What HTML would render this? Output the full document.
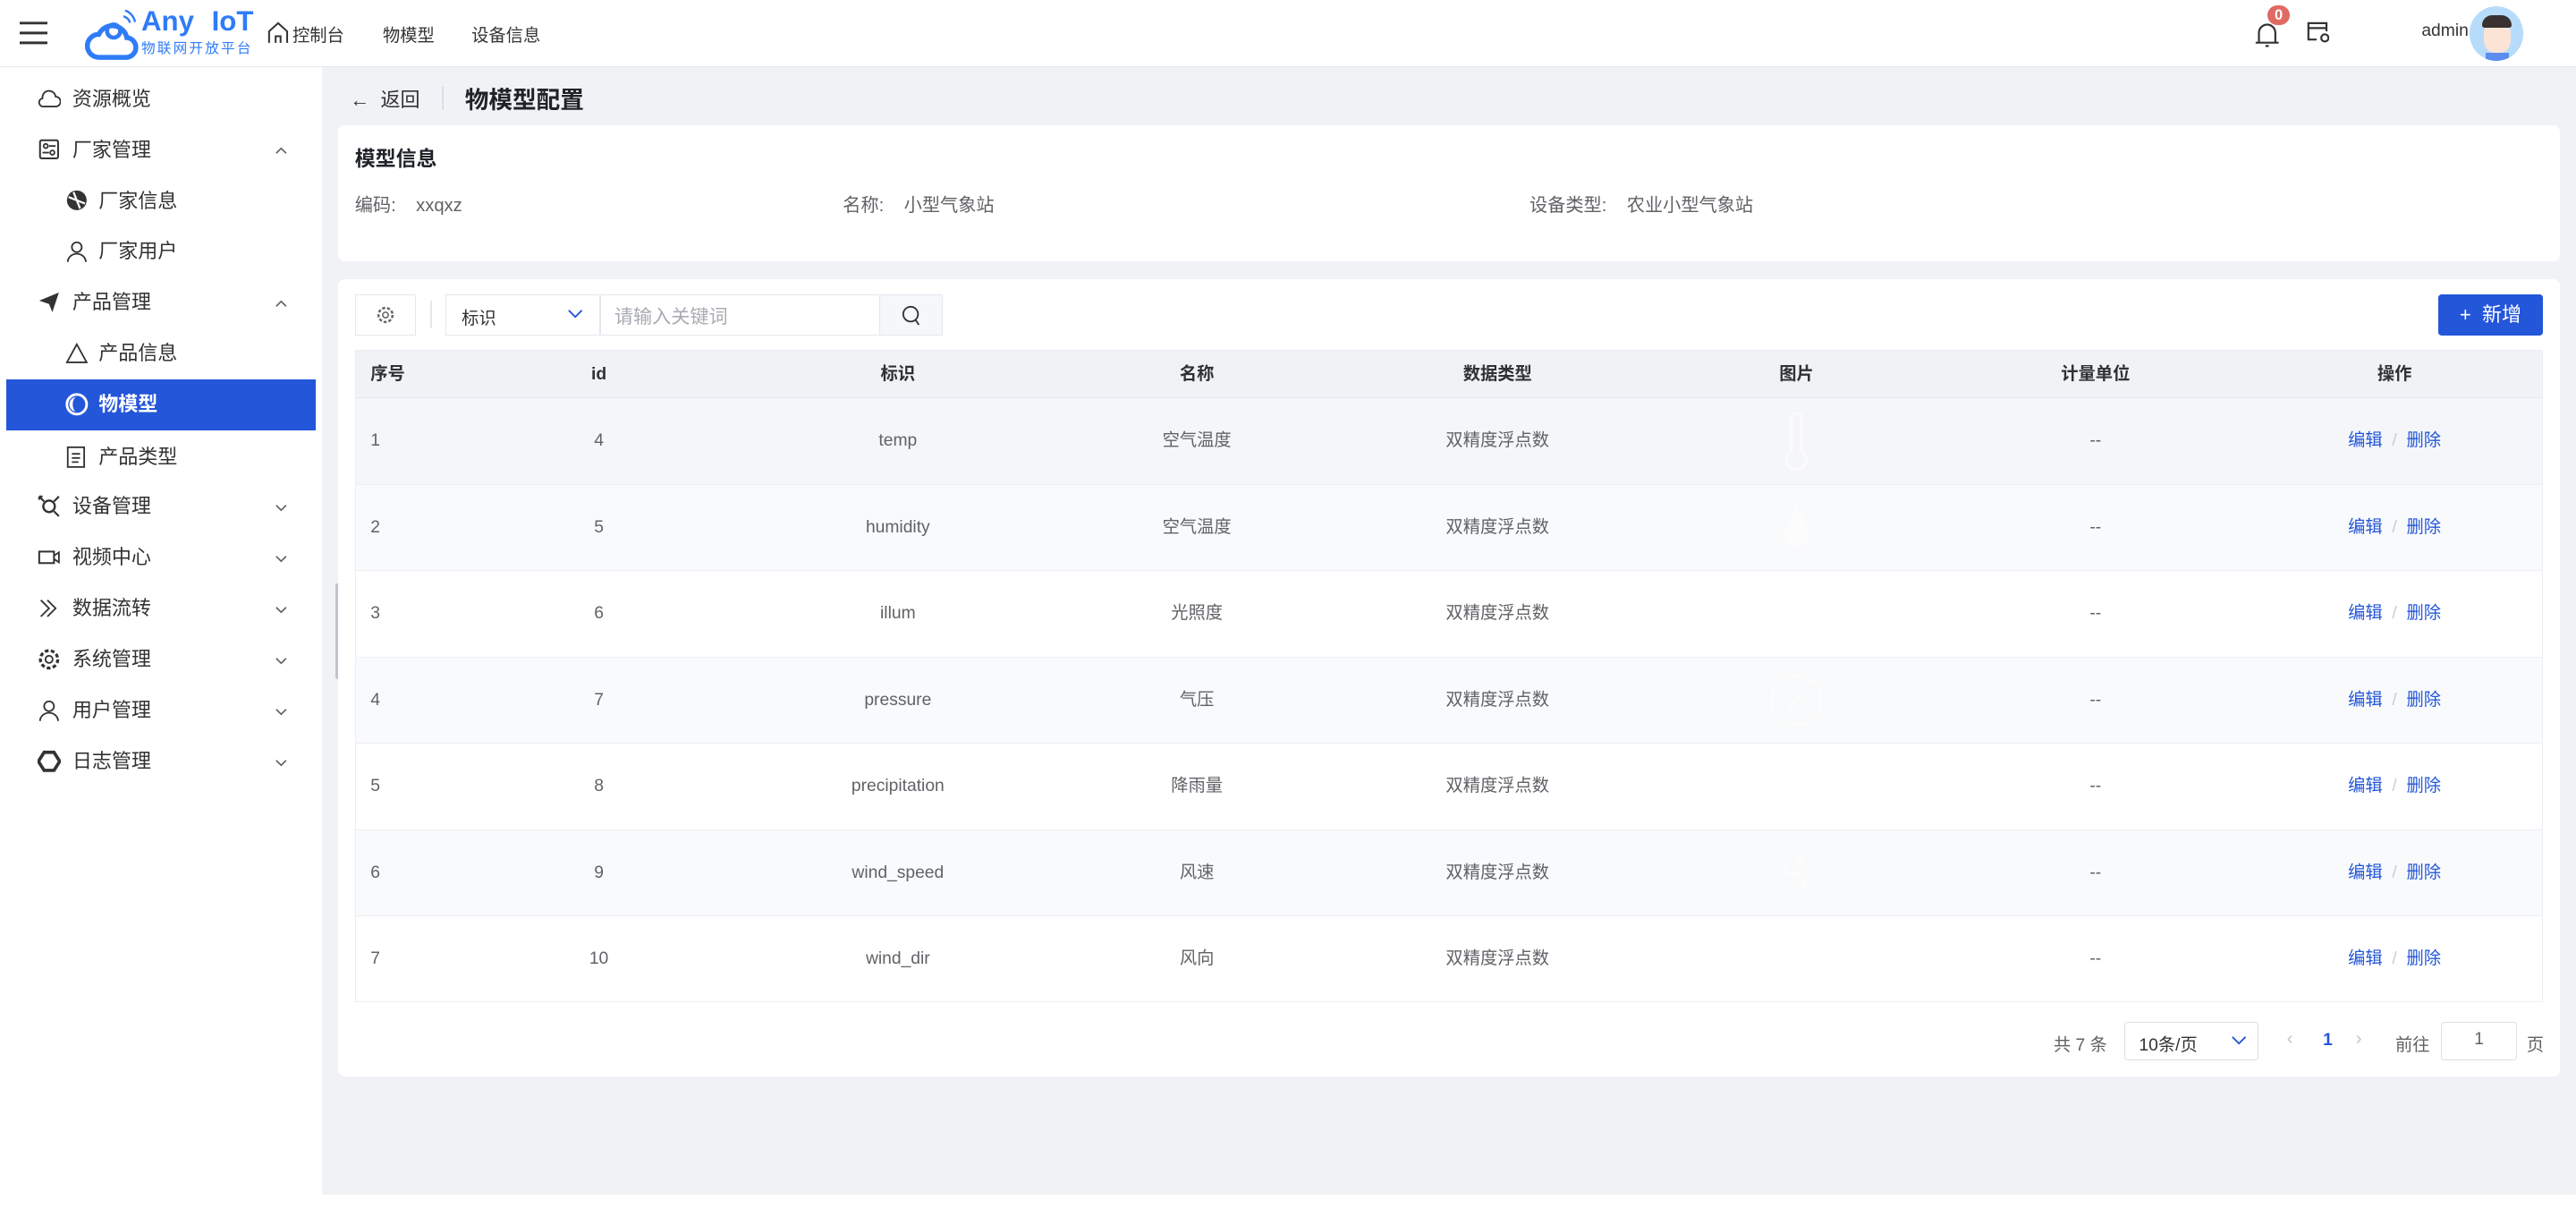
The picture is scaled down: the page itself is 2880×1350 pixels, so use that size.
<!DOCTYPE html>
<html><head><meta charset="utf-8">
<style>
*{box-sizing:border-box;margin:0;padding:0}
html{zoom:1.836735}
body{width:1568px;height:735px;overflow:hidden;background:#fff;font-family:"Liberation Sans","Noto Sans CJK SC",sans-serif;color:#303133;position:relative}
.abs{position:absolute}
.hdr{left:0;top:0;width:1568px;height:41px;background:#fff;border-bottom:1px solid #e6e8eb}
.side{left:0;top:41px;width:196px;height:694px;background:#fff}
.main{left:196px;top:41px;width:1372px;height:686px;background:#f0f2f5}
.mi{position:absolute;left:0;width:192px;height:31px;font-size:12px;color:#303133;line-height:31px}
.mi svg{position:absolute;top:8px;width:14px;height:14px}
.mi svg.chev{position:absolute;left:167px;top:13px;width:8px;height:6px}
.mi .t{position:absolute}
.card{background:#fff;border-radius:4px;position:absolute}
.th{position:absolute;top:0;height:29px;line-height:29px;font-size:10.5px;font-weight:bold;color:#303133;text-align:center}
.row{position:absolute;left:0;width:1332px;height:52.5px;border-bottom:1px solid #ebeef5}
.c{position:absolute;top:0;line-height:52px;font-size:10.5px;color:#606266;text-align:center;width:182px}
.op{color:#2356d9}
.pic{opacity:.55}
</style></head><body>
<!-- header -->
<div class="abs hdr">
  <svg class="abs" style="left:12px;top:13px" width="17" height="14" viewBox="0 0 17 14"><path d="M0 1h17M0 7h17M0 13h17" stroke="#333" stroke-width="1.6"/></svg>
  <svg class="abs" style="left:51px;top:5px" width="36" height="32" viewBox="0 0 36 32"><path d="M9 30h16a6 6 0 0 0 1-12 9 9 0 0 0-17-2 7 7 0 0 0 0 14z" fill="none" stroke="#2f7cf6" stroke-width="3"/><circle cx="18" cy="14" r="4" fill="none" stroke="#2f7cf6" stroke-width="2.5"/><path d="M24 5a6 6 0 0 1 4 4M25 1.5a9 9 0 0 1 6 7" fill="none" stroke="#2f7cf6" stroke-width="1.3"/></svg>
  <div class="abs" style="left:86px;top:3px;font-size:17px;font-weight:bold;color:#2f7cf6;word-spacing:6px">Any IoT</div>
  <div class="abs" style="left:86px;top:23px;font-size:8.5px;color:#2f7cf6;letter-spacing:1.2px">物联网开放平台</div>
  <svg class="abs" style="left:163px;top:13px" width="13" height="13" viewBox="0 0 13 13"><path d="M1 13V6L6.5 1 12 6v7M5 13V9h3v4" fill="none" stroke="#333" stroke-width="1.1"/></svg>
  <div class="abs" style="left:178px;top:13px;font-size:10.5px;color:#333">控制台</div>
  <div class="abs" style="left:233px;top:13px;font-size:10.5px;color:#333">物模型</div>
  <div class="abs" style="left:287px;top:13px;font-size:10.5px;color:#333">设备信息</div>
  <svg class="abs" style="left:1372px;top:12px" width="16" height="17" viewBox="0 0 16 17"><path d="M3 14V8a5 5 0 0 1 10 0v6M1 14h14M7 16h2" fill="none" stroke="#333" stroke-width="1.2"/></svg>
  <div class="abs" style="left:1380px;top:3px;width:14px;height:12px;border-radius:6px;background:#e06a62;color:#fff;font-size:9px;font-weight:bold;text-align:center;line-height:12px">0</div>
  <svg class="abs" style="left:1404px;top:13px" width="14" height="13" viewBox="0 0 14 13"><path d="M6 11H1V1h11v5M1 4h11" fill="none" stroke="#333" stroke-width="1.2"/><circle cx="11" cy="10" r="2.2" fill="none" stroke="#333" stroke-width="1.2"/></svg>
  <div class="abs" style="left:1474px;top:13px;font-size:10.5px;color:#333">admin</div>
  <div class="abs" style="left:1503px;top:4px;width:33px;height:33px;border-radius:50%;background:#b7dcfb;overflow:hidden">
    <div class="abs" style="left:9px;top:9px;width:16px;height:19px;border-radius:7px;background:#fbe3d6"></div>
    <div class="abs" style="left:8px;top:5px;width:18px;height:8px;border-radius:8px 8px 2px 2px;background:#3a3030"></div>
    <div class="abs" style="left:10px;top:28px;width:14px;height:6px;background:#5b8def"></div>
  </div>
</div>
<!-- sidebar -->
<div class="abs side">
  <div class="mi" style="top:4px"><svg style="left:23px" viewBox="0 0 14 14"><path d="M4 12h7a3 3 0 0 0 0-6 4 4 0 0 0-8 1 2.5 2.5 0 0 0 1 5z" fill="none" stroke="#333"/></svg><span class="t" style="left:44px">资源概览</span></div>
  <div class="mi" style="top:35px"><svg style="left:23px" viewBox="0 0 14 14"><rect x="1.5" y="1.5" width="11" height="11" rx="1" fill="none" stroke="#333" stroke-width="1.1"/><circle cx="5" cy="5" r="1.3" fill="none" stroke="#333"/><circle cx="9" cy="9" r="1.3" fill="none" stroke="#333"/><path d="M7 5h4M3 9h4" stroke="#333"/></svg><span class="t" style="left:44px">厂家管理</span><svg class="chev" viewBox="0 0 8 6"><path d="M1 4.5l3-3 3 3" fill="none" stroke="#606266" stroke-width=".9"/></svg></div>
  <div class="mi" style="top:66px"><svg style="left:40px" viewBox="0 0 14 14"><circle cx="7" cy="7" r="6" fill="#333"/><path d="M2 5l10 4M5 2l4 10" stroke="#fff" stroke-width="1.2"/></svg><span class="t" style="left:60px">厂家信息</span></div>
  <div class="mi" style="top:97px"><svg style="left:40px" viewBox="0 0 14 14"><circle cx="7" cy="4.5" r="3" fill="none" stroke="#333"/><path d="M1.5 13.5a5.5 5 0 0 1 11 0" fill="none" stroke="#333"/></svg><span class="t" style="left:60px">厂家用户</span></div>
  <div class="mi" style="top:128px"><svg style="left:23px" viewBox="0 0 14 14"><path d="M1 6l12-5-4 12-2-5z" fill="#333"/></svg><span class="t" style="left:44px">产品管理</span><svg class="chev" viewBox="0 0 8 6"><path d="M1 4.5l3-3 3 3" fill="none" stroke="#606266" stroke-width=".9"/></svg></div>
  <div class="mi" style="top:159px"><svg style="left:40px" viewBox="0 0 14 14"><path d="M7 1.5L13 12.5H1z" fill="none" stroke="#333"/></svg><span class="t" style="left:60px">产品信息</span></div>
  <div class="mi" style="top:190px;left:4px;width:188px;background:#2356d9;color:#fff;font-weight:bold"><svg style="left:36px" viewBox="0 0 14 14"><circle cx="7" cy="7" r="6" fill="none" stroke="#fff" stroke-width="1.6"/><path d="M7 2.5A4.5 4.5 0 0 0 7 11.5A2.5 4.5 0 0 1 7 2.5z" fill="#fff"/></svg><span class="t" style="left:56px">物模型</span></div>
  <div class="mi" style="top:222px"><svg style="left:40px" viewBox="0 0 14 14"><rect x="1.5" y="1" width="10" height="12" fill="none" stroke="#333"/><path d="M4 5h5M4 7.5h5M4 10h4" stroke="#333"/></svg><span class="t" style="left:60px">产品类型</span></div>
  <div class="mi" style="top:252px"><svg style="left:23px" viewBox="0 0 14 14"><circle cx="7" cy="7" r="3.5" fill="none" stroke="#333" stroke-width="1.3"/><path d="M1 1l3 3M13 1l-3 3M10 10l3 3M1 1h2M1 1v2" stroke="#333" stroke-width="1.2"/></svg><span class="t" style="left:44px">设备管理</span><svg class="chev" viewBox="0 0 8 6"><path d="M1 1.5l3 3 3-3" fill="none" stroke="#606266" stroke-width=".9"/></svg></div>
  <div class="mi" style="top:283px"><svg style="left:23px" viewBox="0 0 14 14"><rect x="1" y="3.5" width="9" height="7" fill="none" stroke="#333" stroke-width="1.1"/><path d="M10 6l3-2v6l-3-2" fill="none" stroke="#333"/></svg><span class="t" style="left:44px">视频中心</span><svg class="chev" viewBox="0 0 8 6"><path d="M1 1.5l3 3 3-3" fill="none" stroke="#606266" stroke-width=".9"/></svg></div>
  <div class="mi" style="top:314px"><svg style="left:23px" viewBox="0 0 14 14"><path d="M2 2l5 5-5 5M6 2l5 5-5 5" fill="none" stroke="#333"/></svg><span class="t" style="left:44px">数据流转</span><svg class="chev" viewBox="0 0 8 6"><path d="M1 1.5l3 3 3-3" fill="none" stroke="#606266" stroke-width=".9"/></svg></div>
  <div class="mi" style="top:345px"><svg style="left:23px" viewBox="0 0 14 14"><circle cx="7" cy="7" r="2.2" fill="none" stroke="#333"/><circle cx="7" cy="7" r="5.3" fill="none" stroke="#333" stroke-width="1.8" stroke-dasharray="2.3 1.4"/></svg><span class="t" style="left:44px">系统管理</span><svg class="chev" viewBox="0 0 8 6"><path d="M1 1.5l3 3 3-3" fill="none" stroke="#606266" stroke-width=".9"/></svg></div>
  <div class="mi" style="top:376px"><svg style="left:23px" viewBox="0 0 14 14"><circle cx="7" cy="4.5" r="3" fill="none" stroke="#333"/><path d="M1.5 13.5a5.5 5 0 0 1 11 0" fill="none" stroke="#333"/></svg><span class="t" style="left:44px">用户管理</span><svg class="chev" viewBox="0 0 8 6"><path d="M1 1.5l3 3 3-3" fill="none" stroke="#606266" stroke-width=".9"/></svg></div>
  <div class="mi" style="top:407px"><svg style="left:23px" viewBox="0 0 14 14"><path d="M4 1.5h6l3.5 5.5-3.5 5.5H4L.5 7z" fill="none" stroke="#333" stroke-width="2"/></svg><span class="t" style="left:44px">日志管理</span><svg class="chev" viewBox="0 0 8 6"><path d="M1 1.5l3 3 3-3" fill="none" stroke="#606266" stroke-width=".9"/></svg></div>
</div>
<!-- main -->
<div class="abs main">
  <div class="abs" style="left:8px;top:314px;width:3px;height:58px;border-radius:2px;background:#c0c4cc"></div>
  <div class="abs" style="left:17px;top:10px;font-size:12px;color:#333">←&nbsp; 返回</div>
  <div class="abs" style="left:73px;top:12px;width:1px;height:14px;background:#dcdfe6"></div>
  <div class="abs" style="left:87px;top:8px;font-size:14.5px;font-weight:bold;color:#1f2329">物模型配置</div>
  <div class="card" style="left:10px;top:35px;width:1352px;height:83px">
    <div class="abs" style="left:10px;top:10px;font-size:12.5px;font-weight:bold;color:#1f2329">模型信息</div>
    <div class="abs" style="left:10px;top:40px;font-size:11px;color:#606266">编码:&nbsp;&nbsp;&nbsp; xxqxz</div>
    <div class="abs" style="left:307px;top:40px;font-size:11px;color:#606266">名称:&nbsp;&nbsp;&nbsp; 小型气象站</div>
    <div class="abs" style="left:725px;top:40px;font-size:11px;color:#606266">设备类型:&nbsp;&nbsp;&nbsp; 农业小型气象站</div>
  </div>
  <div class="card" style="left:10px;top:129px;width:1352px;height:485px">
    <div class="abs" style="left:10px;top:9px;width:37px;height:25px;border:1px solid #e4e7ed;background:#fff"><svg class="abs" style="left:12px;top:6px" width="12" height="12" viewBox="0 0 14 14"><circle cx="7" cy="7" r="2" fill="none" stroke="#666"/><circle cx="7" cy="7" r="5" fill="none" stroke="#666" stroke-width="1.6" stroke-dasharray="2.2 1.3"/></svg></div>
    <div class="abs" style="left:56px;top:13px;width:1px;height:17px;background:#e4e7ed"></div>
    <div class="abs" style="left:65px;top:9px;width:303px;height:25px;border:1px solid #e4e7ed"></div>
    <div class="abs" style="left:75px;top:15px;font-size:10.5px;color:#333">标识</div>
    <svg class="abs" style="left:139px;top:18px" width="10" height="7" viewBox="0 0 10 7"><path d="M1 1l4 4 4-4" fill="none" stroke="#2356d9"/></svg>
    <div class="abs" style="left:159px;top:9px;width:1px;height:25px;background:#e4e7ed"></div>
    <div class="abs" style="left:168px;top:14px;font-size:11.5px;color:#a8abb2">请输入关键词</div>
    <div class="abs" style="left:329px;top:9px;width:39px;height:25px;background:#f5f7fa;border:1px solid #e4e7ed"><svg class="abs" style="left:13px;top:6px" width="12" height="13" viewBox="0 0 12 13"><circle cx="5.5" cy="5.5" r="4.5" fill="none" stroke="#333"/><path d="M8.5 9l2 3" stroke="#333"/></svg></div>
    <div class="abs" style="left:1278px;top:9px;width:64px;height:25px;background:#2356d9;border-radius:2px;color:#fff;font-size:12px;line-height:25px;text-align:center">+&nbsp; 新增</div>
    <div class="abs" style="left:10px;top:43px;width:1332px;height:397px;border:1px solid #ebeef5;overflow:hidden">
      <div class="abs" style="left:0;top:0;width:1332px;height:29px;background:#f0f2f6;border-bottom:1px solid #e4e7ed">
        <div class="th" style="left:9px;text-align:left">序号</div>
        <div class="th" style="left:57px;width:182px">id</div>
        <div class="th" style="left:239px;width:182px">标识</div>
        <div class="th" style="left:421px;width:182px">名称</div>
        <div class="th" style="left:604px;width:182px">数据类型</div>
        <div class="th" style="left:786px;width:182px">图片</div>
        <div class="th" style="left:968px;width:182px">计量单位</div>
        <div class="th" style="left:1150px;width:182px">操作</div>
      </div>
      <div class="row" style="top:29px;background:#f4f6f9">
        <div class="c" style="left:9px;width:auto">1</div><div class="c" style="left:57px">4</div><div class="c" style="left:239px">temp</div><div class="c" style="left:421px">空气温度</div><div class="c" style="left:604px">双精度浮点数</div>
        <svg class="abs pic" style="left:868px;top:8px" width="18" height="36" viewBox="0 0 18 36"><path d="M6 4a3 3 0 0 1 6 0v20a6 6 0 1 1-6 0z" fill="none" stroke="#fff" stroke-width="2"/></svg>
        <div class="c" style="left:968px">--</div><div class="c" style="left:1150px"><span class="op">编辑</span> <span style="color:#ccc">&nbsp;/&nbsp;</span> <span class="op">删除</span></div></div>
      <div class="row" style="top:81.5px;background:#f9fafb">
        <div class="c" style="left:9px;width:auto">2</div><div class="c" style="left:57px">5</div><div class="c" style="left:239px">humidity</div><div class="c" style="left:421px">空气温度</div><div class="c" style="left:604px">双精度浮点数</div>
        <svg class="abs pic" style="left:868px;top:10px" width="18" height="32" viewBox="0 0 18 32"><path d="M9 2C5 12 2 16 2 21a7 7 0 0 0 14 0c0-5-3-9-7-19z" fill="#fff"/></svg>
        <div class="c" style="left:968px">--</div><div class="c" style="left:1150px"><span class="op">编辑</span> <span style="color:#ccc">&nbsp;/&nbsp;</span> <span class="op">删除</span></div></div>
      <div class="row" style="top:134px;background:#fff">
        <div class="c" style="left:9px;width:auto">3</div><div class="c" style="left:57px">6</div><div class="c" style="left:239px">illum</div><div class="c" style="left:421px">光照度</div><div class="c" style="left:604px">双精度浮点数</div>
        <div class="c" style="left:968px">--</div><div class="c" style="left:1150px"><span class="op">编辑</span> <span style="color:#ccc">&nbsp;/&nbsp;</span> <span class="op">删除</span></div></div>
      <div class="row" style="top:186.5px;background:#f9fafb">
        <div class="c" style="left:9px;width:auto">4</div><div class="c" style="left:57px">7</div><div class="c" style="left:239px">pressure</div><div class="c" style="left:421px">气压</div><div class="c" style="left:604px">双精度浮点数</div>
        <svg class="abs pic" style="left:860px;top:9px" width="34" height="34" viewBox="0 0 34 34"><circle cx="17" cy="17" r="15" fill="none" stroke="#fff" stroke-width="2"/><path d="M12 22l10-10" stroke="#fff" stroke-width="2"/></svg>
        <div class="c" style="left:968px">--</div><div class="c" style="left:1150px"><span class="op">编辑</span> <span style="color:#ccc">&nbsp;/&nbsp;</span> <span class="op">删除</span></div></div>
      <div class="row" style="top:239px;background:#fff">
        <div class="c" style="left:9px;width:auto">5</div><div class="c" style="left:57px">8</div><div class="c" style="left:239px">precipitation</div><div class="c" style="left:421px">降雨量</div><div class="c" style="left:604px">双精度浮点数</div>
        <div class="c" style="left:968px">--</div><div class="c" style="left:1150px"><span class="op">编辑</span> <span style="color:#ccc">&nbsp;/&nbsp;</span> <span class="op">删除</span></div></div>
      <div class="row" style="top:291.5px;background:#f9fafb">
        <div class="c" style="left:9px;width:auto">6</div><div class="c" style="left:57px">9</div><div class="c" style="left:239px">wind_speed</div><div class="c" style="left:421px">风速</div><div class="c" style="left:604px">双精度浮点数</div>
        <svg class="abs pic" style="left:862px;top:12px" width="30" height="28" viewBox="0 0 30 28"><circle cx="15" cy="14" r="3" fill="#fff"/><path d="M15 11C13 4 18 2 20 6zM18 16c6 3 4 8 0 7zM12 15c-6 2-8-3-4-5z" fill="#fff"/></svg>
        <div class="c" style="left:968px">--</div><div class="c" style="left:1150px"><span class="op">编辑</span> <span style="color:#ccc">&nbsp;/&nbsp;</span> <span class="op">删除</span></div></div>
      <div class="row" style="top:344px;background:#fff;border-bottom:none">
        <div class="c" style="left:9px;width:auto">7</div><div class="c" style="left:57px">10</div><div class="c" style="left:239px">wind_dir</div><div class="c" style="left:421px">风向</div><div class="c" style="left:604px">双精度浮点数</div>
        <div class="c" style="left:968px">--</div><div class="c" style="left:1150px"><span class="op">编辑</span> <span style="color:#ccc">&nbsp;/&nbsp;</span> <span class="op">删除</span></div></div>
    </div>
    <div class="abs" style="left:1044px;top:457px;font-size:10.5px;color:#606266">共 7 条</div>
    <div class="abs" style="left:1087px;top:452px;width:82px;height:23px;border:1px solid #dcdfe6;border-radius:2px"></div>
    <div class="abs" style="left:1096px;top:457px;font-size:10.5px;color:#333">10条/页</div>
    <svg class="abs" style="left:1152px;top:460px" width="10" height="7" viewBox="0 0 10 7"><path d="M1 1l4 4 4-4" fill="none" stroke="#2356d9"/></svg>
    <div class="abs" style="left:1186px;top:456px;font-size:11px;color:#c0c4cc">‹</div>
    <div class="abs" style="left:1208px;top:457px;font-size:10.5px;color:#2356d9;font-weight:bold">1</div>
    <div class="abs" style="left:1228px;top:456px;font-size:11px;color:#c0c4cc">›</div>
    <div class="abs" style="left:1252px;top:457px;font-size:10.5px;color:#606266">前往</div>
    <div class="abs" style="left:1280px;top:452px;width:46px;height:23px;border:1px solid #dcdfe6;border-radius:2px;text-align:center;line-height:21px;font-size:10.5px;color:#606266">1</div>
    <div class="abs" style="left:1332px;top:457px;font-size:10.5px;color:#606266">页</div>
  </div>
</div>
</body></html>
